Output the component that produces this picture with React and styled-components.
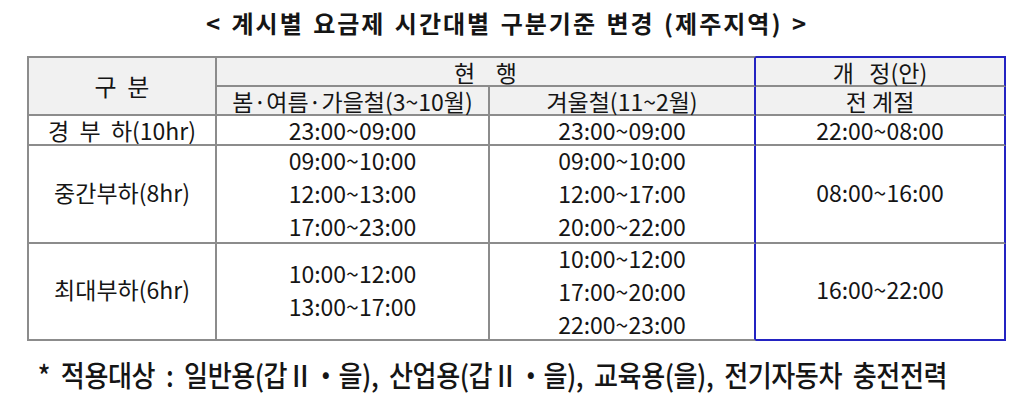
import React from "react";
import styled, { createGlobalStyle } from "styled-components";

const GREY = "#8c8c8c";
const BLUE = "#2323c2";

const GlobalStyle = createGlobalStyle`
  * { box-sizing: border-box; }
  body {
    margin: 0;
    background: #fff;
    font-family: "Noto Sans CJK KR", "Noto Sans", sans-serif;
    color: #151515;
  }
`;

const Page = styled.div`
  width: 1024px;
  height: 400px;
  overflow: hidden;
  display: flex;
  flex-direction: column;
`;

const Title = styled.h1`
  margin: 0;
  height: 56px;
  padding-bottom: 12px;
  display: flex;
  align-items: center;
  justify-content: center;
  padding-right: 10px;
  font-size: 24px;
  font-weight: 700;
  letter-spacing: 2px;
  word-spacing: 2px;
`;

const Table = styled.div`
  margin-left: 27px;
  display: grid;
  grid-template-columns: 190px 273px 266px 250px;
  grid-template-rows: 31px 29px 30px 98px 97px;
`;

const Cell = styled.div`
  grid-column: span ${(p) => p.$cols || 1};
  grid-row: span ${(p) => p.$rows || 1};
  display: flex;
  flex-direction: column;
  align-items: center;
  justify-content: center;
  background: ${(p) => (p.$head ? "#f1f1f1" : "#fff")};
  border-right: 2px solid ${(p) => p.$right || GREY};
  border-bottom: 2px solid ${(p) => p.$bottom || GREY};
  ${(p) => p.$top && `border-top: 2px solid ${p.$top};`}
  ${(p) => p.$left && `border-left: 2px solid ${p.$left};`}
  font-size: ${(p) => p.$size || 23}px;
  line-height: ${(p) => (p.$head ? "24px" : "33px")};
  white-space: pre;
  padding-bottom: ${(p) => p.$lift || 0}px;
`;

const Note = styled.p`
  margin: 0;
  padding: 12px 0 0 42px;
  font-size: 29px;
  font-weight: 500;
  letter-spacing: -0.5px;
  transform: scaleX(0.9);
  transform-origin: left center;
  white-space: pre;
`;

const Lines = ({ items }) => items.map((t) => <span key={t}>{t}</span>);

export default function App() {
  return (
    <Page>
      <GlobalStyle />
      <Title>{"< 계시별 요금제 시간대별 구분기준 변경 (제주지역) >"}</Title>
      <Table>
        <Cell $head $rows={2} $top={GREY} $left={GREY} $size={24}>
          {"구  분"}
        </Cell>
        <Cell $head $cols={2} $top={GREY} $right={BLUE}>
          {"현    행"}
        </Cell>
        <Cell $head $top={BLUE} $right={BLUE}>
          {"개   정(안)"}
        </Cell>

        <Cell $head>봄·여름·가을철(3~10월)</Cell>
        <Cell $head $right={BLUE}>겨울철(11~2월)</Cell>
        <Cell $head $right={BLUE}>{"전 계절"}</Cell>

        <Cell $left={GREY}>{"경  부  하(10hr)"}</Cell>
        <Cell>23:00~09:00</Cell>
        <Cell $right={BLUE}>23:00~09:00</Cell>
        <Cell $right={BLUE}>22:00~08:00</Cell>

        <Cell $left={GREY} $lift={4}>중간부하(8hr)</Cell>
        <Cell $lift={2}>
          <Lines items={["09:00~10:00", "12:00~13:00", "17:00~23:00"]} />
        </Cell>
        <Cell $right={BLUE} $lift={2}>
          <Lines items={["09:00~10:00", "12:00~17:00", "20:00~22:00"]} />
        </Cell>
        <Cell $right={BLUE} $lift={4}>08:00~16:00</Cell>

        <Cell $left={GREY} $lift={4}>최대부하(6hr)</Cell>
        <Cell $lift={4}>
          <Lines items={["10:00~12:00", "13:00~17:00"]} />
        </Cell>
        <Cell $right={BLUE}>
          <Lines items={["10:00~12:00", "17:00~20:00", "22:00~23:00"]} />
        </Cell>
        <Cell $right={BLUE} $bottom={BLUE} $lift={4}>16:00~22:00</Cell>
      </Table>
      <Note>{"*  적용대상  :  일반용(갑Ⅱ・을),  산업용(갑Ⅱ・을),  교육용(을),  전기자동차  충전전력"}</Note>
    </Page>
  );
}
